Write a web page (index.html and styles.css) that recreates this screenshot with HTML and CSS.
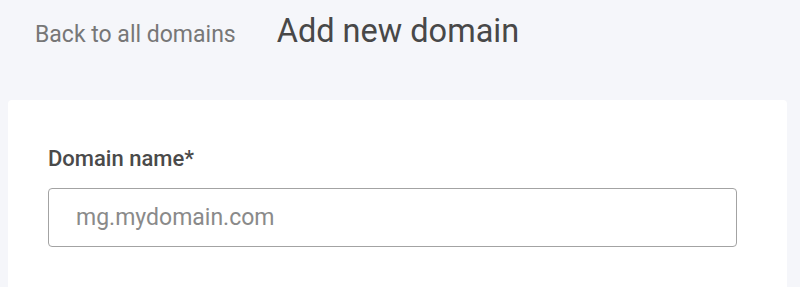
FILE: index.html
```html
<!DOCTYPE html>
<html lang="en">
<head>
<meta charset="utf-8">
<title>Add new domain</title>
<link rel="stylesheet" href="styles.css">
</head>
<body>
<header class="topbar">
  <a class="back-link" href="#">Back to all domains</a>
  <h1 class="page-title">Add new domain</h1>
</header>
<main class="card">
  <form class="domain-form">
    <label class="field-label" for="domain">Domain name*</label>
    <input class="field-input" id="domain" type="text" placeholder="mg.mydomain.com">
  </form>
</main>
</body>
</html>
```
FILE: styles.css
```css
* { box-sizing: border-box; }
html, body {
  margin: 0;
  padding: 0;
  background: #f5f6fa;
  font-family: Roboto, "Liberation Sans", Arial, sans-serif;
  overflow: hidden;
}
.topbar {
  display: flex;
  align-items: baseline;
  gap: 41px;
  padding: 11px 35px 0;
  height: 51px;
}
.back-link {
  font-size: 23px;
  line-height: 40px;
  color: #777777;
  text-decoration: none;
}
.page-title {
  margin: 0;
  font-size: 32.5px;
  font-weight: 400;
  line-height: 40px;
  color: #484848;
}
.card {
  margin: 49px 13px 0 8px;
  background: #ffffff;
  border-radius: 4px 4px 0 0;
  height: 187px;
  padding: 46px 40px 0;
}
.domain-form {
  display: flex;
  flex-direction: column;
  align-items: flex-start;
}
.field-label {
  font-size: 22px;
  font-weight: 500;
  line-height: 26px;
  color: #4a4a4a;
  margin-bottom: 16px;
}
.field-input {
  width: 689px;
  height: 59px;
  border: 1.5px solid #a3a3a3;
  border-radius: 4px;
  padding: 0 27px;
  font-family: Roboto, "Liberation Sans", Arial, sans-serif;
  font-size: 23px;
  color: #333;
  background: #fff;
  outline: none;
}
.field-input::placeholder {
  color: #8a8a8a;
}
```
